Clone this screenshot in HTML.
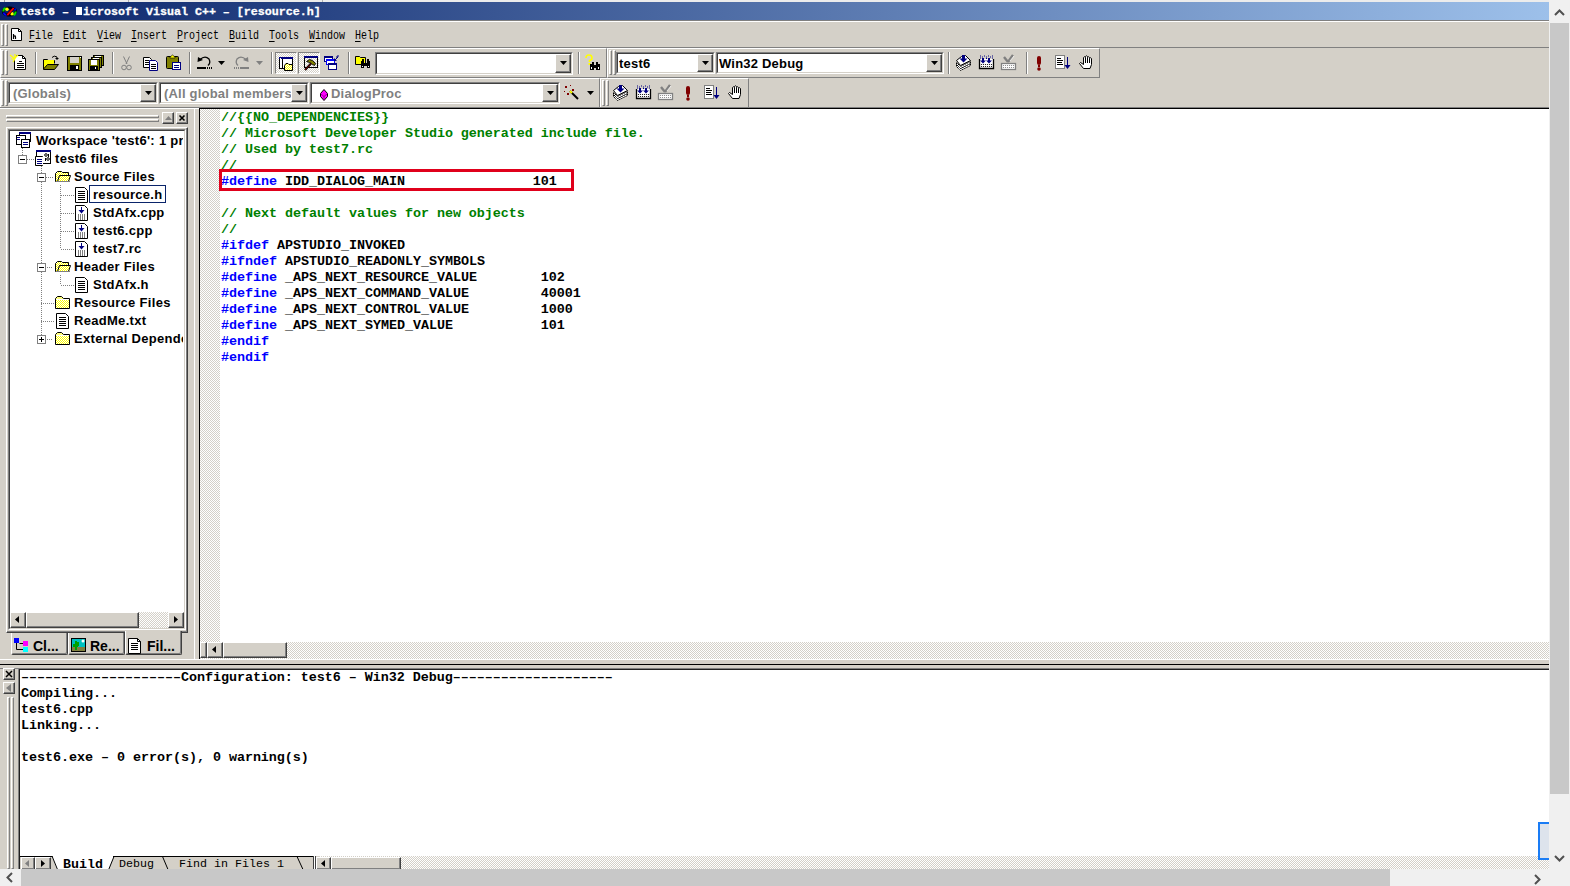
<!DOCTYPE html>
<html><head><meta charset="utf-8"><style>
*{margin:0;padding:0;box-sizing:border-box}
html,body{width:1570px;height:886px;overflow:hidden;background:#d4d0c8;font-family:"Liberation Sans",sans-serif;position:relative}
.a{position:absolute}
svg.a{overflow:visible}
.ct{font:bold 13px "Liberation Sans",sans-serif;letter-spacing:0.2px;white-space:pre;overflow:hidden}
.menu{position:absolute;top:23.5px;height:25px;font:12.5px "Liberation Mono",monospace;line-height:25px;transform:scaleX(0.8);transform-origin:0 0;color:#000;white-space:pre}
.menu u{text-decoration:none;position:relative}.menu u:after{content:"";position:absolute;left:0;right:1px;bottom:1px;height:1px;background:#000}
.code{position:absolute;font:bold 13.4px "Liberation Mono",monospace;letter-spacing:-0.04px;line-height:16px;white-space:pre;color:#000}
.g{color:#008000}.b{color:#0000ff}
.hatch{background-color:#d4d0c8;background-image:repeating-conic-gradient(#fff 0 25%,#d4d0c8 0 50%);background-size:2px 2px}
.tree{position:absolute;font:bold 13px "Liberation Sans",sans-serif;letter-spacing:0.3px;white-space:pre;color:#000;line-height:18px;height:18px}
.dotv{position:absolute;width:1px;background-image:linear-gradient(#808080 50%,transparent 50%);background-size:1px 2px}
.doth{position:absolute;height:1px;background-image:linear-gradient(to right,#808080 50%,transparent 50%);background-size:2px 1px}

</style></head><body>
<div class="a" style="left:0px;top:0px;width:1549px;height:2px;background:#ececec"></div>
<div class="a" style="left:4px;top:0px;width:1px;height:2px;background:#a0a0a0"></div>
<div class="a" style="left:128px;top:0px;width:1px;height:2px;background:#b0b0b0"></div>
<div class="a" style="left:322px;top:0px;width:1px;height:2px;background:#b0b0b0"></div>
<div class="a" style="left:0px;top:2px;width:1549px;height:18px;background:linear-gradient(to right,#0a246a,#9dc0ea)"></div>
<svg width="0" height="0" style="position:absolute"><defs><pattern id="dith" width="2" height="2" patternUnits="userSpaceOnUse"><rect width="1" height="1" fill="#ffff00"/><rect x="1" y="1" width="1" height="1" fill="#ffff00"/><rect x="1" width="1" height="1" fill="#fff"/><rect y="1" width="1" height="1" fill="#fff"/></pattern></defs></svg>
<svg class="a" style="left:2px;top:7px" width="15" height="9" viewBox="0 0 15 9"><ellipse cx="7.5" cy="4.5" rx="6.3" ry="3.7" fill="none" stroke="#000" stroke-width="2.8"/><path d="M1.3 4.5Q1.4 1.6 3.6 0.9" stroke="#00e000" stroke-width="2" fill="none"/><path d="M13.7 4.5Q13.6 7.4 11.4 8.1" stroke="#00e000" stroke-width="2" fill="none"/><path d="M1.5 5.5Q2.2 7.8 4.8 8.2" stroke="#0000ff" stroke-width="2" fill="none"/><path d="M13.5 3.5Q12.8 1.2 10.2 0.8" stroke="#0000ff" stroke-width="2" fill="none"/><circle cx="5" cy="2.3" r="1.7" fill="#ffff00"/><circle cx="10" cy="6.7" r="1.7" fill="#ffff00"/><path d="M5 8.6L12 0.6" stroke="#000" stroke-width="2.8"/><path d="M5.3 8.2L11.7 1" stroke="#ff0000" stroke-width="1.8"/></svg>
<div class="a" style="left:20px;top:2px;height:18px;color:#fff;-webkit-text-stroke:0.3px #fff;font:bold 11.67px 'Liberation Mono',monospace;line-height:20px;white-space:pre">test6 – <span style="display:inline-block;width:6px;height:8px;background:#fff;margin-right:1px;vertical-align:0px"></span>icrosoft Visual C++ – [resource.h]</div>
<div class="a" style="left:0px;top:20px;width:1549px;height:1px;background:#808080"></div>
<div class="a" style="left:0px;top:21px;width:1549px;height:1px;background:#ffffff"></div>
<div class="a" style="left:1px;top:24px;width:3px;height:22px;border-top:1px solid #ffffff;border-left:1px solid #ffffff;border-bottom:1px solid #808080;border-right:1px solid #808080"></div>
<div class="a" style="left:5px;top:24px;width:3px;height:22px;border-top:1px solid #ffffff;border-left:1px solid #ffffff;border-bottom:1px solid #808080;border-right:1px solid #808080"></div>
<svg class="a" style="left:11px;top:28px" width="11" height="13" viewBox="0 0 11 13"><path d="M0.5 0.5H7.5L10.5 3.5V12.5H0.5Z" fill="#fff" stroke="#000"/><path d="M7.5 0.5V3.5H10.5" fill="none" stroke="#000"/><path d="M2.5 6V11M2.5 8.5Q4.5 7 4.5 9V11" stroke="#000" fill="none" stroke-width="1.2"/></svg>
<div class="menu" style="left:28.8px"><u>F</u>ile</div>
<div class="menu" style="left:62.8px"><u>E</u>dit</div>
<div class="menu" style="left:96.8px"><u>V</u>iew</div>
<div class="menu" style="left:130.8px"><u>I</u>nsert</div>
<div class="menu" style="left:176.8px"><u>P</u>roject</div>
<div class="menu" style="left:228.8px"><u>B</u>uild</div>
<div class="menu" style="left:268.8px"><u>T</u>ools</div>
<div class="menu" style="left:308.8px"><u>W</u>indow</div>
<div class="menu" style="left:354.8px"><u>H</u>elp</div>
<div class="a" style="left:0px;top:47px;width:1549px;height:1px;background:#808080"></div>
<div class="a" style="left:0px;top:48px;width:607px;height:30px;border-top:1px solid #ffffff;border-left:1px solid #ffffff;border-bottom:1px solid #808080;border-right:1px solid #808080"></div>
<div class="a" style="left:1px;top:50px;width:3px;height:25px;border-top:1px solid #ffffff;border-left:1px solid #ffffff;border-bottom:1px solid #808080;border-right:1px solid #808080"></div>
<div class="a" style="left:5px;top:50px;width:3px;height:25px;border-top:1px solid #ffffff;border-left:1px solid #ffffff;border-bottom:1px solid #808080;border-right:1px solid #808080"></div>
<svg class="a" style="left:10px;top:54px" width="16" height="16" viewBox="0 0 16 16"><path d="M6.5 1.5H12.5L15.5 4.5V15.5H4.5V6" fill="#fff" stroke="#000"/><path d="M12.5 1.5V4.5H15.5" fill="none" stroke="#000"/><rect x="7" y="9" width="7" height="1" fill="#000"/><rect x="7" y="11" width="7" height="1" fill="#000"/><rect x="7" y="13" width="7" height="1" fill="#000"/><rect x="9" y="7" width="3" height="1" fill="#000"/><path d="M0 1L5 5M5 0V5M1 5H4M8 1L5 4M5 5L3 8" stroke="#ffff00" stroke-width="1.2"/></svg>
<div class="a" style="left:35px;top:52px;width:1px;height:22px;background:#808080"></div>
<div class="a" style="left:36px;top:52px;width:1px;height:22px;background:#ffffff"></div>
<svg class="a" style="left:43px;top:55px" width="16" height="16" viewBox="0 0 16 16"><path d="M0.5 4.5H4.5L5.5 5.5H11.5V8.5" fill="none" stroke="#000"/><rect x="1" y="5" width="10" height="9" fill="#ffff00"/><path d="M0.5 4.5V14.5H11.5L15.5 9.5H4.5L0.5 14" fill="#808000" stroke="#000"/><path d="M9 2.5Q11 0 14 2V4" fill="none" stroke="#000"/><path d="M12 3H16L14 5Z" fill="#000"/></svg>
<svg class="a" style="left:67px;top:56px" width="15" height="15" viewBox="0 0 15 15"><rect x="0.5" y="0.5" width="14" height="14" fill="#808000" stroke="#000"/><rect x="3" y="1" width="9" height="6" fill="#d4d0c8"/><rect x="3" y="9" width="9" height="6" fill="#000"/><rect x="9" y="10" width="2" height="3" fill="#fff"/><rect x="13" y="1" width="1" height="1" fill="#fff"/></svg>
<svg class="a" style="left:88px;top:55px" width="16" height="16" viewBox="0 0 16 16"><rect x="5.5" y="0.5" width="10" height="10" fill="#808000" stroke="#000"/><rect x="7" y="1" width="6" height="2" fill="#fff"/><rect x="3.5" y="2.5" width="10" height="10" fill="#808000" stroke="#000"/><rect x="5" y="3" width="6" height="2" fill="#fff"/><rect x="0.5" y="4.5" width="11" height="11" fill="#808000" stroke="#000"/><rect x="3" y="5" width="6" height="5" fill="#fff"/><rect x="2" y="11" width="8" height="5" fill="#000"/><rect x="7" y="12" width="1" height="2" fill="#fff"/></svg>
<div class="a" style="left:112px;top:52px;width:1px;height:22px;background:#808080"></div>
<div class="a" style="left:113px;top:52px;width:1px;height:22px;background:#ffffff"></div>
<svg class="a" style="left:121px;top:56px" width="11" height="15" viewBox="0 0 11 15"><path d="M2.5 0.5L6 8M8.5 0.5L5 8" stroke="#808080" fill="none"/><circle cx="3" cy="11.5" r="2.3" fill="none" stroke="#808080"/><circle cx="8" cy="11.5" r="2.3" fill="none" stroke="#808080"/></svg>
<svg class="a" style="left:143px;top:57px" width="15" height="14" viewBox="0 0 15 14"><path d="M0.5 0.5H6.5L8.5 2.5V10.5H0.5Z" fill="#fff" stroke="#000"/><rect x="2" y="3" width="4" height="1" fill="#000"/><rect x="2" y="5" width="5" height="1" fill="#000"/><rect x="2" y="7" width="5" height="1" fill="#000"/><path d="M6.5 3.5H12.5L14.5 5.5V13.5H6.5Z" fill="#fff" stroke="#000080"/><rect x="8" y="7" width="5" height="1" fill="#000"/><rect x="8" y="9" width="5" height="1" fill="#000"/><rect x="8" y="11" width="5" height="1" fill="#000"/></svg>
<svg class="a" style="left:166px;top:55px" width="15" height="15" viewBox="0 0 15 15"><rect x="0.5" y="1.5" width="12" height="12" rx="1" fill="#808000" stroke="#000"/><path d="M4 2L6.5 0L9 2V3H4Z" fill="#ffff00" stroke="#000" stroke-width="0.6"/><rect x="6.5" y="7.5" width="8" height="7" fill="#fff" stroke="#000080"/><rect x="8" y="10" width="5" height="1" fill="#000080"/><rect x="8" y="12" width="5" height="1" fill="#000080"/></svg>
<div class="a" style="left:189px;top:52px;width:1px;height:22px;background:#808080"></div>
<div class="a" style="left:190px;top:52px;width:1px;height:22px;background:#ffffff"></div>
<svg class="a" style="left:197px;top:56px" width="15" height="13" viewBox="0 0 15 13"><path d="M3 3.5Q8 -1 12 3Q14 7 11 9.5" fill="none" stroke="#000" stroke-width="1.3"/><path d="M0.5 6L1 1L6 4Z" fill="#000"/><rect x="0" y="11" width="9" height="2" fill="#000"/><rect x="10" y="11" width="1" height="2" fill="#000"/><rect x="12" y="11" width="1" height="2" fill="#000"/><rect x="14" y="11" width="1" height="2" fill="#000"/></svg>
<svg class="a" style="left:218px;top:61px" width="7" height="4"><path d="M0 0H7L3.5 4Z" fill="#000"/></svg>
<svg class="a" style="left:234px;top:56px" width="15" height="13" viewBox="0 0 15 13"><path d="M12 3.5Q7 -1 3 3Q1 7 4 9.5" fill="none" stroke="#808080" stroke-width="1.3"/><path d="M14.5 6L14 1L9 4Z" fill="#808080"/><rect x="6" y="11" width="9" height="2" fill="#808080"/><rect x="4" y="11" width="1" height="2" fill="#808080"/><rect x="2" y="11" width="1" height="2" fill="#808080"/><rect x="0" y="11" width="1" height="2" fill="#808080"/></svg>
<svg class="a" style="left:256px;top:61px" width="7" height="4"><path d="M0 0H7L3.5 4Z" fill="#808080"/></svg>
<div class="a" style="left:271px;top:52px;width:1px;height:22px;background:#808080"></div>
<div class="a" style="left:272px;top:52px;width:1px;height:22px;background:#ffffff"></div>
<div class="a" style="left:275px;top:52px;width:22px;height:22px;border-top:1px solid #808080;border-left:1px solid #808080;border-bottom:1px solid #ffffff;border-right:1px solid #ffffff;background-color:#fff;background-image:repeating-conic-gradient(#d4d0c8 0 25%,#fff 0 50%);background-size:2px 2px"></div>
<div class="a" style="left:298px;top:52px;width:22px;height:22px;border-top:1px solid #808080;border-left:1px solid #808080;border-bottom:1px solid #ffffff;border-right:1px solid #ffffff;background-color:#fff;background-image:repeating-conic-gradient(#d4d0c8 0 25%,#fff 0 50%);background-size:2px 2px"></div>
<svg class="a" style="left:279px;top:57px" width="14" height="14" viewBox="0 0 14 14"><rect x="0.5" y="0.5" width="13" height="11" fill="#fff" stroke="#000"/><rect x="0" y="0" width="14" height="2" fill="#000080"/><rect x="1" y="1" width="1" height="1" fill="#fff"/><rect x="3" y="2" width="1" height="10" fill="#000"/><path d="M5.5 8.5L7 6.5H9L10 7.5H13.5V13.5H5.5Z" fill="url(#dith)" stroke="#000"/></svg>
<svg class="a" style="left:304px;top:56px" width="14" height="16" viewBox="0 0 14 16"><rect x="0.5" y="0.5" width="13" height="11" fill="none" stroke="#000"/><rect x="0" y="0" width="14" height="2" fill="#000080"/><path d="M2.5 5.5L5.5 3.5L8.5 4.5L11.5 7.5L10.5 9.5L8.5 8.5L7.5 7.5L5.5 6.5Z" fill="#808000" stroke="#000" stroke-width="0.9"/><path d="M7 7.5L1 14" stroke="#000" stroke-width="2.2"/><path d="M7 7.5L1 14" stroke="#800000" stroke-width="1"/></svg>
<svg class="a" style="left:324px;top:55px" width="16" height="16" viewBox="0 0 16 16"><rect x="0.5" y="1.5" width="8" height="5" fill="#fff" stroke="#000080"/><rect x="0" y="1" width="9" height="2" fill="#000080"/><rect x="2.5" y="4.5" width="8" height="5" fill="#fff" stroke="#0000ff"/><rect x="2" y="4" width="9" height="2" fill="#0000ff"/><rect x="4.5" y="8.5" width="8" height="6" fill="#fff" stroke="#000080"/><rect x="4" y="8" width="9" height="2" fill="#000080"/><path d="M11 5L14 2M14 0V2H12" stroke="#000080" fill="none"/><path d="M10 3V6H13Z" fill="#000080"/></svg>
<div class="a" style="left:348px;top:52px;width:1px;height:22px;background:#808080"></div>
<div class="a" style="left:349px;top:52px;width:1px;height:22px;background:#ffffff"></div>
<svg class="a" style="left:355px;top:55px" width="16" height="16" viewBox="0 0 16 16"><path d="M0.5 1.5H4.5L5.5 2.5H10.5V9.5H0.5Z" fill="#ffff00" stroke="#000"/><rect x="6" y="6" width="3" height="7" fill="#000"/><rect x="12" y="6" width="3" height="7" fill="#000"/><rect x="7" y="4" width="2" height="3" fill="#000"/><rect x="12" y="4" width="2" height="3" fill="#000"/><rect x="8" y="8" width="5" height="3" fill="#000"/><rect x="7" y="11" width="1" height="1" fill="#fff"/><rect x="13" y="11" width="1" height="1" fill="#fff"/></svg>
<div class="a" style="left:375px;top:52px;width:198px;height:23px;background:#fff;border-top:1px solid #808080;border-left:1px solid #808080;border-bottom:1px solid #ffffff;border-right:1px solid #ffffff"></div>
<div class="a" style="left:376px;top:53px;width:196px;height:21px;border-top:1px solid #404040;border-left:1px solid #404040;border-bottom:1px solid #d4d0c8;border-right:1px solid #d4d0c8"></div>
<div class="a" style="left:555px;top:54px;width:16px;height:19px;background:#d4d0c8;border-top:1px solid #ffffff;border-left:1px solid #ffffff;border-bottom:1px solid #404040;border-right:1px solid #404040;box-shadow:inset -1px -1px 0 #808080"></div>
<svg class="a" style="left:560px;top:61px" width="7" height="4"><path d="M0 0H7L3.5 4Z" fill="#000"/></svg>
<div class="a" style="left:578px;top:52px;width:1px;height:22px;background:#808080"></div>
<div class="a" style="left:579px;top:52px;width:1px;height:22px;background:#ffffff"></div>
<svg class="a" style="left:585px;top:55px" width="16" height="16" viewBox="0 0 16 16"><path d="M1 3Q1 0 4 0Q7 0 7 3Q7 5 4.5 5.5V7" fill="none" stroke="#ffff00" stroke-width="1.6"/><rect x="3.5" y="8" width="2" height="2" fill="#ffff00"/><rect x="5" y="9" width="4" height="6" fill="#000"/><rect x="11" y="9" width="4" height="6" fill="#000"/><rect x="7" y="7" width="2" height="3" fill="#000"/><rect x="11" y="7" width="2" height="3" fill="#000"/><rect x="8" y="10" width="4" height="3" fill="#000"/><rect x="6" y="12" width="1" height="2" fill="#fff"/><rect x="13" y="12" width="1" height="2" fill="#fff"/></svg>
<div class="a" style="left:607px;top:48px;width:493px;height:30px;border-top:1px solid #ffffff;border-left:1px solid #ffffff;border-bottom:1px solid #808080;border-right:1px solid #808080"></div>
<div class="a" style="left:609px;top:50px;width:3px;height:25px;border-top:1px solid #ffffff;border-left:1px solid #ffffff;border-bottom:1px solid #808080;border-right:1px solid #808080"></div>
<div class="a" style="left:613px;top:50px;width:3px;height:25px;border-top:1px solid #ffffff;border-left:1px solid #ffffff;border-bottom:1px solid #808080;border-right:1px solid #808080"></div>
<div class="a" style="left:616px;top:52px;width:99px;height:22px;background:#fff;border-top:1px solid #808080;border-left:1px solid #808080;border-bottom:1px solid #ffffff;border-right:1px solid #ffffff"></div>
<div class="a" style="left:617px;top:53px;width:97px;height:20px;border-top:1px solid #404040;border-left:1px solid #404040;border-bottom:1px solid #d4d0c8;border-right:1px solid #d4d0c8"></div>
<div class="a ct" style="left:619px;top:55px;width:92px;height:17px;line-height:17px;color:#000">test6</div>
<div class="a" style="left:697px;top:54px;width:16px;height:18px;background:#d4d0c8;border-top:1px solid #ffffff;border-left:1px solid #ffffff;border-bottom:1px solid #404040;border-right:1px solid #404040;box-shadow:inset -1px -1px 0 #808080"></div>
<svg class="a" style="left:702px;top:61px" width="7" height="4"><path d="M0 0H7L3.5 4Z" fill="#000"/></svg>
<div class="a" style="left:716px;top:52px;width:228px;height:22px;background:#fff;border-top:1px solid #808080;border-left:1px solid #808080;border-bottom:1px solid #ffffff;border-right:1px solid #ffffff"></div>
<div class="a" style="left:717px;top:53px;width:226px;height:20px;border-top:1px solid #404040;border-left:1px solid #404040;border-bottom:1px solid #d4d0c8;border-right:1px solid #d4d0c8"></div>
<div class="a ct" style="left:719px;top:55px;width:221px;height:17px;line-height:17px;color:#000">Win32 Debug</div>
<div class="a" style="left:926px;top:54px;width:16px;height:18px;background:#d4d0c8;border-top:1px solid #ffffff;border-left:1px solid #ffffff;border-bottom:1px solid #404040;border-right:1px solid #404040;box-shadow:inset -1px -1px 0 #808080"></div>
<svg class="a" style="left:931px;top:61px" width="7" height="4"><path d="M0 0H7L3.5 4Z" fill="#000"/></svg>
<div class="a" style="left:948px;top:52px;width:1px;height:22px;background:#808080"></div>
<div class="a" style="left:949px;top:52px;width:1px;height:22px;background:#ffffff"></div>
<svg class="a" style="left:956px;top:55px" width="15" height="16" viewBox="0 0 15 16"><path d="M0.5 9.5L4.5 13.5L14.5 8.5L14.5 10.5L4.5 15.5L0.5 11.5Z" fill="#fff" stroke="#000" stroke-dasharray="1.5 0.6"/><path d="M0.5 7.5L4.5 11.5L14.5 6.5L14.5 8.5L4.5 13.5L0.5 9.5Z" fill="#fff" stroke="#000" stroke-dasharray="1.5 0.6"/><path d="M0.5 5.5L5.5 1.5L9.5 0.5L14.5 5.5L4.5 10.5Z" fill="#fff" stroke="#000"/><rect x="6" y="0" width="3" height="4" fill="#000080"/><path d="M3.5 3.5H11.5L7.5 7.5Z" fill="#000080"/></svg>
<svg class="a" style="left:979px;top:55px" width="15" height="15" viewBox="0 0 15 15"><path d="M0.5 4V13.5H14.5V4" fill="#fff" stroke="#000" stroke-width="1.3"/><circle cx="2.5" cy="9.5" r="0.6" fill="#000"/><circle cx="4.5" cy="9.5" r="0.6" fill="#000"/><circle cx="6.5" cy="9.5" r="0.6" fill="#000"/><circle cx="8.5" cy="9.5" r="0.6" fill="#000"/><circle cx="10.5" cy="9.5" r="0.6" fill="#000"/><circle cx="12.5" cy="9.5" r="0.6" fill="#000"/><circle cx="2.5" cy="11.5" r="0.6" fill="#000"/><circle cx="4.5" cy="11.5" r="0.6" fill="#000"/><circle cx="6.5" cy="11.5" r="0.6" fill="#000"/><circle cx="8.5" cy="11.5" r="0.6" fill="#000"/><circle cx="10.5" cy="11.5" r="0.6" fill="#000"/><circle cx="12.5" cy="11.5" r="0.6" fill="#000"/><rect x="1" y="0.5" width="1" height="1" fill="#000080"/><rect x="5" y="0.5" width="1" height="1" fill="#000080"/><rect x="9" y="0.5" width="1" height="1" fill="#000080"/><rect x="13" y="0.5" width="1" height="1" fill="#000080"/><rect x="3" y="1.5" width="1" height="1" fill="#000080"/><rect x="7" y="1.5" width="1" height="1" fill="#000080"/><rect x="11" y="1.5" width="1" height="1" fill="#000080"/><rect x="1" y="2.5" width="1" height="1" fill="#000080"/><rect x="13" y="2.5" width="1" height="1" fill="#000080"/><rect x="7" y="3" width="1" height="1" fill="#000080"/><rect x="3" y="3" width="2" height="3" fill="#000080"/><path d="M1 5.5H7L4 8.5Z" fill="#000080"/><rect x="9" y="3" width="2" height="3" fill="#000080"/><path d="M7 5.5H13L10 8.5Z" fill="#000080"/></svg>
<svg class="a" style="left:1001px;top:55px" width="15" height="15" viewBox="0 0 15 15"><rect x="0.5" y="8.5" width="14" height="6" fill="#fff" stroke="#808080" stroke-width="1.3"/><circle cx="2.5" cy="10.5" r="0.6" fill="#808080"/><circle cx="4.5" cy="10.5" r="0.6" fill="#808080"/><circle cx="6.5" cy="10.5" r="0.6" fill="#808080"/><circle cx="8.5" cy="10.5" r="0.6" fill="#808080"/><circle cx="10.5" cy="10.5" r="0.6" fill="#808080"/><circle cx="12.5" cy="10.5" r="0.6" fill="#808080"/><circle cx="2.5" cy="12.5" r="0.6" fill="#808080"/><circle cx="4.5" cy="12.5" r="0.6" fill="#808080"/><circle cx="6.5" cy="12.5" r="0.6" fill="#808080"/><circle cx="8.5" cy="12.5" r="0.6" fill="#808080"/><circle cx="10.5" cy="12.5" r="0.6" fill="#808080"/><circle cx="12.5" cy="12.5" r="0.6" fill="#808080"/><path d="M3 2L7 7M12 0L7 7" stroke="#808080" stroke-width="2.4" fill="none"/><path d="M13 1L9 6" stroke="#fff" stroke-width="0.8"/></svg>
<div class="a" style="left:1026px;top:52px;width:1px;height:22px;background:#808080"></div>
<div class="a" style="left:1027px;top:52px;width:1px;height:22px;background:#ffffff"></div>
<svg class="a" style="left:1037px;top:56px" width="4" height="15" viewBox="0 0 4 15"><rect x="0" y="0" width="4" height="9" rx="2" fill="#800000"/><rect x="1" y="9" width="2" height="2" fill="#800000"/><circle cx="2" cy="13" r="1.8" fill="#800000"/></svg>
<svg class="a" style="left:1055px;top:55px" width="16" height="15" viewBox="0 0 16 15"><rect x="0.5" y="0.5" width="9" height="13" fill="#fff" stroke="#808080"/><rect x="2" y="3" width="4" height="1" fill="#000"/><rect x="2" y="5" width="6" height="1" fill="#000"/><rect x="2" y="7" width="5" height="1" fill="#000"/><rect x="2" y="9" width="6" height="1" fill="#000"/><rect x="12" y="2" width="1" height="11" fill="#000080"/><path d="M9.5 10H15.5L12.5 14Z" fill="#000080"/></svg>
<svg class="a" style="left:1079px;top:55px" width="14" height="15" viewBox="0 0 14 15"><path d="M4.5 13.5L0.5 8.5L1.5 7.5L4.5 9.5V2.5Q5.5 1 6.5 2.5V1.5Q7.5 0 8.5 1.5V2.5Q9.5 1 10.5 2.5V3.5Q11.5 2 12.5 3.5V9.5L11 13.5Z" fill="#fff" stroke="#000"/><path d="M6.5 2.5V8M8.5 2.5V8M10.5 3.5V8" stroke="#000"/></svg>
<div class="a" style="left:0px;top:78px;width:600px;height:30px;border-top:1px solid #ffffff;border-left:1px solid #ffffff;border-bottom:1px solid #808080;border-right:1px solid #808080"></div>
<div class="a" style="left:1px;top:80px;width:3px;height:26px;border-top:1px solid #ffffff;border-left:1px solid #ffffff;border-bottom:1px solid #808080;border-right:1px solid #808080"></div>
<div class="a" style="left:5px;top:80px;width:3px;height:26px;border-top:1px solid #ffffff;border-left:1px solid #ffffff;border-bottom:1px solid #808080;border-right:1px solid #808080"></div>
<div class="a" style="left:8px;top:82px;width:150px;height:22px;background:#fff;border-top:1px solid #808080;border-left:1px solid #808080;border-bottom:1px solid #ffffff;border-right:1px solid #ffffff"></div>
<div class="a" style="left:9px;top:83px;width:148px;height:20px;border-top:1px solid #404040;border-left:1px solid #404040;border-bottom:1px solid #d4d0c8;border-right:1px solid #d4d0c8"></div>
<div class="a ct" style="left:13px;top:85px;width:141px;height:17px;line-height:17px;color:#808080">(Globals)</div>
<div class="a" style="left:140px;top:84px;width:16px;height:18px;background:#d4d0c8;border-top:1px solid #ffffff;border-left:1px solid #ffffff;border-bottom:1px solid #404040;border-right:1px solid #404040;box-shadow:inset -1px -1px 0 #808080"></div>
<svg class="a" style="left:145px;top:91px" width="7" height="4"><path d="M0 0H7L3.5 4Z" fill="#000"/></svg>
<div class="a" style="left:159px;top:82px;width:150px;height:22px;background:#fff;border-top:1px solid #808080;border-left:1px solid #808080;border-bottom:1px solid #ffffff;border-right:1px solid #ffffff"></div>
<div class="a" style="left:160px;top:83px;width:148px;height:20px;border-top:1px solid #404040;border-left:1px solid #404040;border-bottom:1px solid #d4d0c8;border-right:1px solid #d4d0c8"></div>
<div class="a ct" style="left:164px;top:85px;width:141px;height:17px;line-height:17px;color:#808080">(All global members</div>
<div class="a" style="left:291px;top:84px;width:16px;height:18px;background:#d4d0c8;border-top:1px solid #ffffff;border-left:1px solid #ffffff;border-bottom:1px solid #404040;border-right:1px solid #404040;box-shadow:inset -1px -1px 0 #808080"></div>
<svg class="a" style="left:296px;top:91px" width="7" height="4"><path d="M0 0H7L3.5 4Z" fill="#000"/></svg>
<div class="a" style="left:310px;top:82px;width:250px;height:22px;background:#fff;border-top:1px solid #808080;border-left:1px solid #808080;border-bottom:1px solid #ffffff;border-right:1px solid #ffffff"></div>
<div class="a" style="left:311px;top:83px;width:248px;height:20px;border-top:1px solid #404040;border-left:1px solid #404040;border-bottom:1px solid #d4d0c8;border-right:1px solid #d4d0c8"></div>
<div class="a" style="left:542px;top:84px;width:16px;height:18px;background:#d4d0c8;border-top:1px solid #ffffff;border-left:1px solid #ffffff;border-bottom:1px solid #404040;border-right:1px solid #404040;box-shadow:inset -1px -1px 0 #808080"></div>
<svg class="a" style="left:547px;top:91px" width="7" height="4"><path d="M0 0H7L3.5 4Z" fill="#000"/></svg>
<svg class="a" style="left:320px;top:89px" width="8" height="12" viewBox="0 0 8 12"><path d="M4 0.5L7.5 4.5V7.5L4 11.5L0.5 7.5V4.5Z" fill="#ff00ff" stroke="#000" stroke-width="1"/><path d="M0.5 4.5L4 7.5L7.5 4.5M4 7.5V11" stroke="#800080" stroke-width="0.8" fill="none"/></svg>
<div class="a ct" style="left:331px;top:85px;height:18px;line-height:18px;color:#808080">DialogProc</div>
<svg class="a" style="left:564px;top:85px" width="15" height="15" viewBox="0 0 15 15"><path d="M6 6L14 14" stroke="#000" stroke-width="2"/><path d="M6 6L8 8" stroke="#ffff00" stroke-width="2"/><rect x="1" y="1" width="2" height="2" fill="#800000"/><rect x="6" y="0" width="1" height="1" fill="#800000"/><rect x="0" y="6" width="1" height="1" fill="#800000"/><rect x="8" y="4" width="2" height="2" fill="#800000"/><rect x="3" y="8" width="2" height="2" fill="#800000"/></svg>
<svg class="a" style="left:587px;top:91px" width="7" height="4"><path d="M0 0H7L3.5 4Z" fill="#000"/></svg>
<div class="a" style="left:600px;top:78px;width:149px;height:30px;border-top:1px solid #ffffff;border-left:1px solid #ffffff;border-bottom:1px solid #808080;border-right:1px solid #808080"></div>
<div class="a" style="left:602px;top:80px;width:3px;height:26px;border-top:1px solid #ffffff;border-left:1px solid #ffffff;border-bottom:1px solid #808080;border-right:1px solid #808080"></div>
<div class="a" style="left:606px;top:80px;width:3px;height:26px;border-top:1px solid #ffffff;border-left:1px solid #ffffff;border-bottom:1px solid #808080;border-right:1px solid #808080"></div>
<svg class="a" style="left:613px;top:85px" width="15" height="16" viewBox="0 0 15 16"><path d="M0.5 9.5L4.5 13.5L14.5 8.5L14.5 10.5L4.5 15.5L0.5 11.5Z" fill="#fff" stroke="#000" stroke-dasharray="1.5 0.6"/><path d="M0.5 7.5L4.5 11.5L14.5 6.5L14.5 8.5L4.5 13.5L0.5 9.5Z" fill="#fff" stroke="#000" stroke-dasharray="1.5 0.6"/><path d="M0.5 5.5L5.5 1.5L9.5 0.5L14.5 5.5L4.5 10.5Z" fill="#fff" stroke="#000"/><rect x="6" y="0" width="3" height="4" fill="#000080"/><path d="M3.5 3.5H11.5L7.5 7.5Z" fill="#000080"/></svg>
<svg class="a" style="left:636px;top:85px" width="15" height="15" viewBox="0 0 15 15"><path d="M0.5 4V13.5H14.5V4" fill="#fff" stroke="#000" stroke-width="1.3"/><circle cx="2.5" cy="9.5" r="0.6" fill="#000"/><circle cx="4.5" cy="9.5" r="0.6" fill="#000"/><circle cx="6.5" cy="9.5" r="0.6" fill="#000"/><circle cx="8.5" cy="9.5" r="0.6" fill="#000"/><circle cx="10.5" cy="9.5" r="0.6" fill="#000"/><circle cx="12.5" cy="9.5" r="0.6" fill="#000"/><circle cx="2.5" cy="11.5" r="0.6" fill="#000"/><circle cx="4.5" cy="11.5" r="0.6" fill="#000"/><circle cx="6.5" cy="11.5" r="0.6" fill="#000"/><circle cx="8.5" cy="11.5" r="0.6" fill="#000"/><circle cx="10.5" cy="11.5" r="0.6" fill="#000"/><circle cx="12.5" cy="11.5" r="0.6" fill="#000"/><rect x="1" y="0.5" width="1" height="1" fill="#000080"/><rect x="5" y="0.5" width="1" height="1" fill="#000080"/><rect x="9" y="0.5" width="1" height="1" fill="#000080"/><rect x="13" y="0.5" width="1" height="1" fill="#000080"/><rect x="3" y="1.5" width="1" height="1" fill="#000080"/><rect x="7" y="1.5" width="1" height="1" fill="#000080"/><rect x="11" y="1.5" width="1" height="1" fill="#000080"/><rect x="1" y="2.5" width="1" height="1" fill="#000080"/><rect x="13" y="2.5" width="1" height="1" fill="#000080"/><rect x="7" y="3" width="1" height="1" fill="#000080"/><rect x="3" y="3" width="2" height="3" fill="#000080"/><path d="M1 5.5H7L4 8.5Z" fill="#000080"/><rect x="9" y="3" width="2" height="3" fill="#000080"/><path d="M7 5.5H13L10 8.5Z" fill="#000080"/></svg>
<svg class="a" style="left:658px;top:85px" width="15" height="15" viewBox="0 0 15 15"><rect x="0.5" y="8.5" width="14" height="6" fill="#fff" stroke="#808080" stroke-width="1.3"/><circle cx="2.5" cy="10.5" r="0.6" fill="#808080"/><circle cx="4.5" cy="10.5" r="0.6" fill="#808080"/><circle cx="6.5" cy="10.5" r="0.6" fill="#808080"/><circle cx="8.5" cy="10.5" r="0.6" fill="#808080"/><circle cx="10.5" cy="10.5" r="0.6" fill="#808080"/><circle cx="12.5" cy="10.5" r="0.6" fill="#808080"/><circle cx="2.5" cy="12.5" r="0.6" fill="#808080"/><circle cx="4.5" cy="12.5" r="0.6" fill="#808080"/><circle cx="6.5" cy="12.5" r="0.6" fill="#808080"/><circle cx="8.5" cy="12.5" r="0.6" fill="#808080"/><circle cx="10.5" cy="12.5" r="0.6" fill="#808080"/><circle cx="12.5" cy="12.5" r="0.6" fill="#808080"/><path d="M3 2L7 7M12 0L7 7" stroke="#808080" stroke-width="2.4" fill="none"/><path d="M13 1L9 6" stroke="#fff" stroke-width="0.8"/></svg>
<svg class="a" style="left:686px;top:86px" width="4" height="15" viewBox="0 0 4 15"><rect x="0" y="0" width="4" height="9" rx="2" fill="#800000"/><rect x="1" y="9" width="2" height="2" fill="#800000"/><circle cx="2" cy="13" r="1.8" fill="#800000"/></svg>
<svg class="a" style="left:704px;top:85px" width="16" height="15" viewBox="0 0 16 15"><rect x="0.5" y="0.5" width="9" height="13" fill="#fff" stroke="#808080"/><rect x="2" y="3" width="4" height="1" fill="#000"/><rect x="2" y="5" width="6" height="1" fill="#000"/><rect x="2" y="7" width="5" height="1" fill="#000"/><rect x="2" y="9" width="6" height="1" fill="#000"/><rect x="12" y="2" width="1" height="11" fill="#000080"/><path d="M9.5 10H15.5L12.5 14Z" fill="#000080"/></svg>
<svg class="a" style="left:728px;top:85px" width="14" height="15" viewBox="0 0 14 15"><path d="M4.5 13.5L0.5 8.5L1.5 7.5L4.5 9.5V2.5Q5.5 1 6.5 2.5V1.5Q7.5 0 8.5 1.5V2.5Q9.5 1 10.5 2.5V3.5Q11.5 2 12.5 3.5V9.5L11 13.5Z" fill="#fff" stroke="#000"/><path d="M6.5 2.5V8M8.5 2.5V8M10.5 3.5V8" stroke="#000"/></svg>
<div class="a" style="left:0px;top:107px;width:199px;height:1px;background:#808080"></div>
<div class="a" style="left:0px;top:108px;width:199px;height:551px;background:#d4d0c8;border-top:1px solid #ffffff"></div>
<div class="a" style="left:194px;top:109px;width:1px;height:550px;background:#ffffff"></div>
<div class="a" style="left:6px;top:115px;width:153px;height:3px;border-top:1px solid #ffffff;border-left:1px solid #ffffff;border-bottom:1px solid #808080;border-right:1px solid #808080"></div>
<div class="a" style="left:6px;top:119px;width:153px;height:3px;border-top:1px solid #ffffff;border-left:1px solid #ffffff;border-bottom:1px solid #808080;border-right:1px solid #808080"></div>
<div class="a" style="left:162px;top:112px;width:12px;height:12px;background:#d4d0c8;border-top:1px solid #ffffff;border-left:1px solid #ffffff;border-bottom:1px solid #404040;border-right:1px solid #404040;box-shadow:inset -1px -1px 0 #808080"></div>
<svg class="a" style="left:165px;top:116px" width="7" height="4"><path d="M0 4H7L3.5 0Z" fill="#808080"/></svg>
<div class="a" style="left:176px;top:112px;width:12px;height:12px;background:#d4d0c8;border-top:1px solid #ffffff;border-left:1px solid #ffffff;border-bottom:1px solid #404040;border-right:1px solid #404040;box-shadow:inset -1px -1px 0 #808080"></div>
<svg class="a" style="left:179px;top:115px" width="6" height="6"><path d="M0.5 0.5L5.5 5.5M5.5 0.5L0.5 5.5" stroke="#000" stroke-width="1.6"/></svg>
<div class="a" style="left:6px;top:127px;width:182px;height:506px;border-top:1px solid #ffffff;border-left:1px solid #ffffff;border-bottom:1px solid #404040;border-right:1px solid #404040;box-shadow:inset -1px -1px 0 #808080"></div>
<div class="a" style="left:8px;top:129px;width:178px;height:501px;background:#fff;border-top:1px solid #808080;border-left:1px solid #808080;border-bottom:1px solid #ffffff;border-right:1px solid #ffffff"></div>
<div class="a" style="left:9px;top:130px;width:176px;height:499px;border-top:1px solid #404040;border-left:1px solid #404040;border-bottom:1px solid #d4d0c8;border-right:1px solid #d4d0c8"></div>
<div class="dotv" style="left:22px;top:148px;height:7px"></div>
<div class="doth" style="left:27px;top:159px;width:8px"></div>
<div class="dotv" style="left:41px;top:164px;height:172px"></div>
<div class="doth" style="left:46px;top:177px;width:8px"></div>
<div class="doth" style="left:61px;top:195px;width:13px"></div>
<div class="doth" style="left:61px;top:213px;width:13px"></div>
<div class="doth" style="left:61px;top:231px;width:13px"></div>
<div class="doth" style="left:61px;top:249px;width:13px"></div>
<div class="dotv" style="left:60px;top:185px;height:64px"></div>
<div class="doth" style="left:45px;top:267px;width:8px"></div>
<div class="dotv" style="left:60px;top:275px;height:10px"></div>
<div class="doth" style="left:61px;top:285px;width:13px"></div>
<div class="doth" style="left:41px;top:303px;width:13px"></div>
<div class="doth" style="left:41px;top:321px;width:14px"></div>
<div class="doth" style="left:45px;top:339px;width:8px"></div>
<div class="a" style="left:18px;top:155px;width:9px;height:9px;background:#fff;border:1px solid #808080"></div>
<div class="a" style="left:20px;top:159px;width:5px;height:1px;background:#000"></div>
<div class="a" style="left:37px;top:173px;width:9px;height:9px;background:#fff;border:1px solid #808080"></div>
<div class="a" style="left:39px;top:177px;width:5px;height:1px;background:#000"></div>
<div class="a" style="left:37px;top:263px;width:9px;height:9px;background:#fff;border:1px solid #808080"></div>
<div class="a" style="left:39px;top:267px;width:5px;height:1px;background:#000"></div>
<div class="a" style="left:37px;top:335px;width:9px;height:9px;background:#fff;border:1px solid #808080"></div>
<div class="a" style="left:39px;top:339px;width:5px;height:1px;background:#000"></div>
<div class="a" style="left:41px;top:337px;width:1px;height:5px;background:#000"></div>
<svg class="a" style="left:16px;top:132px" width="16" height="16" viewBox="0 0 16 16"><rect x="3.5" y="0.5" width="11" height="9" fill="#fff" stroke="#000"/><rect x="3" y="0" width="12" height="2" fill="#000080"/><rect x="0.5" y="3.5" width="9" height="9" fill="#fff" stroke="#000"/><rect x="1" y="5" width="3" height="1" fill="#000080"/><rect x="1" y="7" width="3" height="1" fill="#000080"/><rect x="5.5" y="7.5" width="8" height="8" fill="#fff" stroke="#000"/><rect x="7" y="10" width="5" height="1" fill="#000080"/><rect x="7" y="12" width="5" height="1" fill="#000080"/></svg>
<svg class="a" style="left:35px;top:150px" width="16" height="16" viewBox="0 0 16 16"><rect x="1.5" y="0.5" width="14" height="13" fill="#fff" stroke="#000"/><rect x="1" y="0" width="15" height="2" fill="#000080"/><circle cx="11" cy="5" r="1.3" fill="none" stroke="#000"/><rect x="13" y="4" width="1" height="3" fill="#000"/><circle cx="13" cy="9" r="1.3" fill="none" stroke="#000"/><rect x="10" y="8" width="1" height="3" fill="#000"/><path d="M0.5 6.5H7.5V15.5H0.5Z" fill="#ffff00" stroke="#000"/><rect x="1" y="7" width="7" height="8" fill="#fff"/><rect x="2" y="9" width="5" height="1" fill="#000080"/><rect x="2" y="11" width="5" height="1" fill="#000080"/><rect x="2" y="13" width="5" height="1" fill="#000080"/></svg>
<svg class="a" style="left:55px;top:169px" width="16" height="16" viewBox="0 0 16 16"><path d="M0.5 4.5L2.5 2.5H6.5L7.5 3.5H13.5V12.5H0.5Z" fill="url(#dith)" stroke="#000"/><path d="M2.5 12.5L4.5 6.5H15.5L13.5 12.5Z" fill="url(#dith)" stroke="#000"/><rect x="1" y="12" width="14" height="1" fill="#808080"/></svg>
<svg class="a" style="left:75px;top:187px" width="13" height="16" viewBox="0 0 13 16"><path d="M0.5 0.5H9.5L12.5 3.5V15.5H0.5Z" fill="#fff" stroke="#000"/><rect x="3" y="4" width="7" height="1" fill="#000"/><rect x="3" y="6" width="7" height="1" fill="#000"/><rect x="3" y="8" width="7" height="1" fill="#000"/><rect x="3" y="10" width="7" height="1" fill="#000"/><rect x="3" y="12" width="7" height="1" fill="#000"/></svg>
<svg class="a" style="left:75px;top:205px" width="13" height="16" viewBox="0 0 13 16"><path d="M0.5 0.5H9.5L12.5 3.5V15.5H0.5Z" fill="#fff" stroke="#000"/><rect x="6" y="2" width="1" height="5" fill="#000080"/><path d="M3.5 5H9.5L6.5 8.5Z" fill="#000080"/><path d="M3 10H4M5 10H6M7 10H8M9 10H10M3 12H4M5 12H6M7 12H8M9 12H10M3 14H4M5 14H6M7 14H8M9 14H10" stroke="#000"/></svg>
<svg class="a" style="left:75px;top:223px" width="13" height="16" viewBox="0 0 13 16"><path d="M0.5 0.5H9.5L12.5 3.5V15.5H0.5Z" fill="#fff" stroke="#000"/><rect x="6" y="2" width="1" height="5" fill="#000080"/><path d="M3.5 5H9.5L6.5 8.5Z" fill="#000080"/><path d="M3 10H4M5 10H6M7 10H8M9 10H10M3 12H4M5 12H6M7 12H8M9 12H10M3 14H4M5 14H6M7 14H8M9 14H10" stroke="#000"/></svg>
<svg class="a" style="left:75px;top:241px" width="13" height="16" viewBox="0 0 13 16"><path d="M0.5 0.5H9.5L12.5 3.5V15.5H0.5Z" fill="#fff" stroke="#000"/><rect x="6" y="2" width="1" height="5" fill="#000080"/><path d="M3.5 5H9.5L6.5 8.5Z" fill="#000080"/><path d="M3 10H4M5 10H6M7 10H8M9 10H10M3 12H4M5 12H6M7 12H8M9 12H10M3 14H4M5 14H6M7 14H8M9 14H10" stroke="#000"/></svg>
<svg class="a" style="left:55px;top:259px" width="16" height="16" viewBox="0 0 16 16"><path d="M0.5 4.5L2.5 2.5H6.5L7.5 3.5H13.5V12.5H0.5Z" fill="url(#dith)" stroke="#000"/><path d="M2.5 12.5L4.5 6.5H15.5L13.5 12.5Z" fill="url(#dith)" stroke="#000"/><rect x="1" y="12" width="14" height="1" fill="#808080"/></svg>
<svg class="a" style="left:75px;top:277px" width="13" height="16" viewBox="0 0 13 16"><path d="M0.5 0.5H9.5L12.5 3.5V15.5H0.5Z" fill="#fff" stroke="#000"/><rect x="3" y="4" width="7" height="1" fill="#000"/><rect x="3" y="6" width="7" height="1" fill="#000"/><rect x="3" y="8" width="7" height="1" fill="#000"/><rect x="3" y="10" width="7" height="1" fill="#000"/><rect x="3" y="12" width="7" height="1" fill="#000"/></svg>
<svg class="a" style="left:55px;top:295px" width="16" height="16" viewBox="0 0 16 16"><path d="M0.5 3.5L2.5 1.5H6.5L8.5 3.5H14.5V13.5H0.5Z" fill="#ffff80" stroke="#000"/><rect x="1" y="5" width="13" height="8" fill="url(#dith)"/><rect x="1" y="4" width="13" height="1" fill="#fff"/></svg>
<svg class="a" style="left:56px;top:313px" width="13" height="16" viewBox="0 0 13 16"><path d="M0.5 0.5H9.5L12.5 3.5V15.5H0.5Z" fill="#fff" stroke="#000"/><rect x="3" y="4" width="7" height="1" fill="#000"/><rect x="3" y="6" width="7" height="1" fill="#000"/><rect x="3" y="8" width="7" height="1" fill="#000"/><rect x="3" y="10" width="7" height="1" fill="#000"/><rect x="3" y="12" width="7" height="1" fill="#000"/></svg>
<svg class="a" style="left:55px;top:331px" width="16" height="16" viewBox="0 0 16 16"><path d="M0.5 3.5L2.5 1.5H6.5L8.5 3.5H14.5V13.5H0.5Z" fill="#ffff80" stroke="#000"/><rect x="1" y="5" width="13" height="8" fill="url(#dith)"/><rect x="1" y="4" width="13" height="1" fill="#fff"/></svg>
<div class="a" style="left:89px;top:185px;width:77px;height:18px;border:1px solid #0a246a"></div>
<div class="a" style="left:10px;top:131px;width:173px;height:470px;overflow:hidden">
<div class="tree" style="left:26px;top:1px">Workspace 'test6': 1 project(s)</div>
<div class="tree" style="left:45px;top:19px">test6 files</div>
<div class="tree" style="left:64px;top:37px">Source Files</div>
<div class="tree" style="left:83px;top:55px">resource.h</div>
<div class="tree" style="left:83px;top:73px">StdAfx.cpp</div>
<div class="tree" style="left:83px;top:91px">test6.cpp</div>
<div class="tree" style="left:83px;top:109px">test7.rc</div>
<div class="tree" style="left:64px;top:127px">Header Files</div>
<div class="tree" style="left:83px;top:145px">StdAfx.h</div>
<div class="tree" style="left:64px;top:163px">Resource Files</div>
<div class="tree" style="left:64px;top:181px">ReadMe.txt</div>
<div class="tree" style="left:64px;top:199px">External Dependencies</div>
</div>
<div class="a" style="left:10px;top:612px;width:16px;height:16px;background:#d4d0c8;border-top:1px solid #ffffff;border-left:1px solid #ffffff;border-bottom:1px solid #404040;border-right:1px solid #404040;box-shadow:inset -1px -1px 0 #808080"></div>
<svg class="a" style="left:15px;top:616px" width="4" height="7"><path d="M4 0V7L0 3.5Z" fill="#000"/></svg>
<div class="a" style="left:26px;top:612px;width:142px;height:16px;background-color:#fff;background-image:repeating-conic-gradient(#d4d0c8 0 25%,#fff 0 50%);background-size:2px 2px"></div>
<div class="a" style="left:26px;top:612px;width:113px;height:16px;background:#d4d0c8;border-top:1px solid #ffffff;border-left:1px solid #ffffff;border-bottom:1px solid #404040;border-right:1px solid #404040;box-shadow:inset -1px -1px 0 #808080"></div>
<div class="a" style="left:168px;top:612px;width:16px;height:16px;background:#d4d0c8;border-top:1px solid #ffffff;border-left:1px solid #ffffff;border-bottom:1px solid #404040;border-right:1px solid #404040;box-shadow:inset -1px -1px 0 #808080"></div>
<svg class="a" style="left:174px;top:616px" width="4" height="7"><path d="M0 0V7L4 3.5Z" fill="#000"/></svg>
<div class="a" style="left:11px;top:633px;width:57px;height:22px;background:#d4d0c8;border-left:1px solid #ffffff;border-bottom:1px solid #404040;border-right:1px solid #404040;box-shadow:inset -1px -1px 0 #808080;border-bottom-left-radius:2px;border-bottom-right-radius:2px"></div>
<svg class="a" style="left:14px;top:638px" width="16" height="16" viewBox="0 0 16 16"><rect x="0" y="0" width="5" height="5" fill="#0000ff"/><rect x="9" y="3" width="5" height="5" fill="#ff00ff"/><rect x="9" y="9" width="5" height="5" fill="#00ffff"/><path d="M2.5 5V11.5H9M5.5 5.5H9" stroke="#000" fill="none"/></svg>
<div class="tree" style="left:33px;top:637px;font-size:14px;letter-spacing:0">Cl...</div>
<div class="a" style="left:68px;top:633px;width:57px;height:22px;background:#d4d0c8;border-left:1px solid #ffffff;border-bottom:1px solid #404040;border-right:1px solid #404040;box-shadow:inset -1px -1px 0 #808080;border-bottom-left-radius:2px;border-bottom-right-radius:2px"></div>
<svg class="a" style="left:71px;top:638px" width="16" height="16" viewBox="0 0 16 16"><rect x="0.5" y="0.5" width="14" height="13" fill="#00c0c0" stroke="#000"/><rect x="1" y="9" width="13" height="4" fill="#808040"/><path d="M5 3V12M3 6V8H7M7 4V8" stroke="#00a000" stroke-width="2" fill="none"/><circle cx="12" cy="3" r="1.5" fill="#fff"/></svg>
<div class="tree" style="left:90px;top:637px;font-size:14px;letter-spacing:0">Re...</div>
<div class="a" style="left:125px;top:631px;width:57px;height:24px;background:#d4d0c8;border-left:1px solid #ffffff;border-bottom:1px solid #404040;border-right:1px solid #404040;box-shadow:inset -1px -1px 0 #808080;border-bottom-left-radius:2px;border-bottom-right-radius:2px"></div>
<svg class="a" style="left:128px;top:638px" width="16" height="16" viewBox="0 0 16 16"><path d="M0.5 0.5H9.5L12.5 3.5V15.5H0.5Z" fill="#fff" stroke="#000"/><path d="M9.5 0.5V3.5H12.5" fill="none" stroke="#000"/><rect x="3" y="5" width="7" height="1" fill="#000"/><rect x="3" y="7" width="7" height="1" fill="#000"/><rect x="3" y="9" width="7" height="1" fill="#000"/><rect x="3" y="11" width="7" height="1" fill="#000"/></svg>
<div class="tree" style="left:147px;top:637px;font-size:14px;letter-spacing:0">Fil...</div>
<div class="a" style="left:199px;top:107px;width:1350px;height:1px;background:#808080"></div>
<div class="a" style="left:199px;top:108px;width:1350px;height:534px;background:#fff;border-top:1px solid #000;border-left:1px solid #000"></div>
<div class="a" style="left:200px;top:109px;width:20px;height:533px;background-color:#fff;background-image:repeating-conic-gradient(#d4d0c8 0 25%,#fff 0 50%);background-size:2px 2px"></div>
<pre class="code" style="left:221px;top:110px"><span class="g">//{{NO_DEPENDENCIES}}
// Microsoft Developer Studio generated include file.
// Used by test7.rc
//</span>
<span class="b">#define</span> IDD_DIALOG_MAIN                101

<span class="g">// Next default values for new objects
//</span>
<span class="b">#ifdef</span> APSTUDIO_INVOKED
<span class="b">#ifndef</span> APSTUDIO_READONLY_SYMBOLS
<span class="b">#define</span> _APS_NEXT_RESOURCE_VALUE        102
<span class="b">#define</span> _APS_NEXT_COMMAND_VALUE         40001
<span class="b">#define</span> _APS_NEXT_CONTROL_VALUE         1000
<span class="b">#define</span> _APS_NEXT_SYMED_VALUE           101
<span class="b">#endif</span>
<span class="b">#endif</span></pre>
<div class="a" style="left:219px;top:169px;width:355px;height:22px;border:3px solid #e0001b"></div>
<div class="a" style="left:199px;top:642px;width:1350px;height:17px;background-color:#fff;background-image:repeating-conic-gradient(#d4d0c8 0 25%,#fff 0 50%);background-size:2px 2px"></div>
<div class="a" style="left:199px;top:642px;width:1px;height:17px;background:#000"></div>
<div class="a" style="left:200px;top:642px;width:7px;height:16px;background:#d4d0c8;border-top:1px solid #ffffff;border-left:1px solid #ffffff;border-bottom:1px solid #404040;border-right:1px solid #404040;box-shadow:inset -1px -1px 0 #808080"></div>
<div class="a" style="left:207px;top:642px;width:16px;height:16px;background:#d4d0c8;border-top:1px solid #ffffff;border-left:1px solid #ffffff;border-bottom:1px solid #404040;border-right:1px solid #404040;box-shadow:inset -1px -1px 0 #808080"></div>
<svg class="a" style="left:212px;top:646px" width="4" height="7"><path d="M4 0V7L0 3.5Z" fill="#000"/></svg>
<div class="a" style="left:223px;top:642px;width:64px;height:16px;background:#d4d0c8;border-top:1px solid #ffffff;border-left:1px solid #ffffff;border-bottom:1px solid #404040;border-right:1px solid #404040;box-shadow:inset -1px -1px 0 #808080"></div>
<div class="a" style="left:0px;top:659px;width:1549px;height:10px;background:#d4d0c8"></div>
<div class="a" style="left:0px;top:659px;width:1549px;height:1px;background:#ffffff"></div>
<div class="a" style="left:0px;top:664px;width:1549px;height:1px;background:#000"></div>
<div class="a" style="left:0px;top:668px;width:1549px;height:1px;background:#808080"></div>
<div class="a" style="left:18px;top:668px;width:1px;height:201px;background:#808080"></div>
<div class="a" style="left:19px;top:669px;width:1530px;height:200px;background:#fff;border-top:1px solid #202020;border-left:1px solid #202020"></div>
<div class="a" style="left:3px;top:668px;width:12px;height:12px;background:#d4d0c8;border-top:1px solid #ffffff;border-left:1px solid #ffffff;border-bottom:1px solid #404040;border-right:1px solid #404040;box-shadow:inset -1px -1px 0 #808080"></div>
<svg class="a" style="left:5px;top:670px" width="8" height="8"><path d="M1 1L7 7M7 1L1 7" stroke="#000" stroke-width="1.5"/></svg>
<div class="a" style="left:3px;top:682px;width:12px;height:12px;background:#d4d0c8;border-top:1px solid #ffffff;border-left:1px solid #ffffff;border-bottom:1px solid #404040;border-right:1px solid #404040;box-shadow:inset -1px -1px 0 #808080"></div>
<svg class="a" style="left:6px;top:684px" width="5" height="8"><path d="M5 0V8L0 4Z" fill="#808080"/></svg>
<div class="a" style="left:7px;top:697px;width:3px;height:172px;border-top:1px solid #ffffff;border-left:1px solid #ffffff;border-bottom:1px solid #808080;border-right:1px solid #808080"></div>
<div class="a" style="left:11px;top:697px;width:3px;height:172px;border-top:1px solid #ffffff;border-left:1px solid #ffffff;border-bottom:1px solid #808080;border-right:1px solid #808080"></div>
<pre class="code" style="left:21px;top:670px">––––––––––––––––––––Configuration: test6 – Win32 Debug––––––––––––––––––––
Compiling...
test6.cpp
Linking...

test6.exe – 0 error(s), 0 warning(s)</pre>
<div class="a" style="left:20px;top:856px;width:300px;height:14px;background:#d4d0c8"></div>
<div class="a" style="left:320px;top:856px;width:1229px;height:14px;background-color:#fff;background-image:repeating-conic-gradient(#d4d0c8 0 25%,#fff 0 50%);background-size:2px 2px"></div>
<svg class="a" style="left:20px;top:856px" width="300" height="14"><path d="M32 0H94L88.5 14H37Z" fill="#fff"/><path d="M0 0.5H32.5M93 0.5H293.5" stroke="#000"/><path d="M32 0L37.5 13.5M88.5 14L94 0.5M142.5 0.5L148 13.5M277 0.5L283 13.5" stroke="#000" fill="none"/><path d="M293.5 0V14M295.5 0V14" stroke="#404040"/><path d="M294.5 0V14" stroke="#fff"/></svg>
<div class="a" style="left:21px;top:857px;width:14px;height:13px;background:#d4d0c8;border-top:1px solid #ffffff;border-left:1px solid #ffffff;border-bottom:1px solid #404040;border-right:1px solid #404040;box-shadow:inset -1px -1px 0 #808080"></div>
<svg class="a" style="left:25px;top:860px" width="4" height="7"><path d="M4 0V7L0 3.5Z" fill="#808080"/></svg>
<div class="a" style="left:35px;top:857px;width:16px;height:13px;background:#d4d0c8;border-top:1px solid #ffffff;border-left:1px solid #ffffff;border-bottom:1px solid #404040;border-right:1px solid #404040;box-shadow:inset -1px -1px 0 #808080"></div>
<svg class="a" style="left:41px;top:860px" width="4" height="7"><path d="M0 0V7L4 3.5Z" fill="#000"/></svg>
<div class="a" style="left:63px;top:856.5px;font:bold 13.33px 'Liberation Mono',monospace;line-height:16px;white-space:pre">Build</div>
<div class="a" style="left:119px;top:855.5px;font:11.67px 'Liberation Mono',monospace;line-height:16px;white-space:pre">Debug</div>
<div class="a" style="left:179px;top:855.5px;font:11.67px 'Liberation Mono',monospace;line-height:16px;white-space:pre">Find in Files 1</div>
<div class="a" style="left:316px;top:857px;width:15px;height:13px;background:#d4d0c8;border-top:1px solid #ffffff;border-left:1px solid #ffffff;border-bottom:1px solid #404040;border-right:1px solid #404040;box-shadow:inset -1px -1px 0 #808080"></div>
<svg class="a" style="left:321px;top:860px" width="4" height="7"><path d="M4 0V7L0 3.5Z" fill="#000"/></svg>
<div class="a" style="left:331px;top:857px;width:70px;height:13px;background:#d4d0c8;border-top:1px solid #ffffff;border-left:1px solid #ffffff;border-bottom:1px solid #404040;border-right:1px solid #404040;box-shadow:inset -1px -1px 0 #808080"></div>
<div class="a" style="left:1549px;top:0px;width:21px;height:886px;background:#f0f0f0"></div>
<div class="a" style="left:1550px;top:23px;width:19px;height:771px;background:#c8c8c8"></div>
<svg class="a" style="left:1554px;top:9px" width="11" height="7"><path d="M1 6L5.5 1.5L10 6" stroke="#505050" stroke-width="2" fill="none"/></svg>
<svg class="a" style="left:1554px;top:855px" width="11" height="7"><path d="M1 1L5.5 5.5L10 1" stroke="#505050" stroke-width="2" fill="none"/></svg>
<div class="a" style="left:1538px;top:822px;width:11px;height:38px;background:#dde3ec;border:2px solid #1a7cf5;border-right:none"></div>
<div class="a" style="left:0px;top:869px;width:1549px;height:17px;background:#f0f0f0"></div>
<div class="a" style="left:21px;top:869px;width:1369px;height:17px;background:#c8c8c8"></div>
<svg class="a" style="left:6px;top:872px" width="7" height="11"><path d="M6 1L1.5 5.5L6 10" stroke="#505050" stroke-width="2" fill="none"/></svg>
<svg class="a" style="left:1534px;top:874px" width="7" height="11"><path d="M1 1L5.5 5.5L1 10" stroke="#505050" stroke-width="2" fill="none"/></svg>
</body></html>
